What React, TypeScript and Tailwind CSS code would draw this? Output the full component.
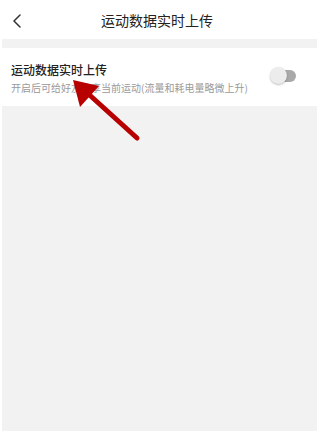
import React from "react";

export default function App() {
  return (
    <div
      className="relative w-[320px] h-[433px] bg-white flex flex-col overflow-hidden"
      style={{ fontFamily: '"Noto Sans CJK SC", "Noto Sans", sans-serif' }}
    >
      {/* Header */}
      <div className="relative h-[39px] flex items-center justify-center shrink-0">
        <svg
          className="absolute left-[12px] top-[14px]"
          width="10"
          height="14"
          viewBox="0 0 10 14"
          fill="none"
        >
          <path d="M8 1 L2 7 L8 13" stroke="#333" strokeWidth="1.5" strokeLinecap="round" strokeLinejoin="round" />
        </svg>
        <span className="text-[14px] leading-none text-[#222] ml-[-6px]">运动数据实时上传</span>
      </div>

      <div className="flex-1 flex flex-col pl-[2px] pr-[3px] pb-[2px]">
        <div className="h-[9px] bg-[#f2f2f2] shrink-0" />
        {/* Row */}
        <div className="h-[58px] bg-white flex items-center justify-between pl-[9px] pr-[20px] shrink-0">
          <div className="flex flex-col">
            <span className="text-[12px] leading-[16px] text-[#222] font-medium mt-[2px]">运动数据实时上传</span>
            <span className="text-[10px] leading-[14px] text-[#9a9a9a] mt-[3px]">
              开启后可给好友分享当前运动(流量和耗电量略微上升)
            </span>
          </div>
          <div className="relative w-[27px] h-[18px] mt-[-2px]">
            <div className="absolute left-[9px] top-[3px] w-[17px] h-[12px] rounded-full bg-[#a9a9a9]" />
            <div className="absolute left-0 top-0 w-[17px] h-[17px] rounded-full bg-[#ececec] shadow-[0_1px_2px_rgba(0,0,0,0.25)]" />
          </div>
        </div>
        <div className="flex-1 bg-[#f2f2f2]" />
      </div>

      {/* Red arrow annotation */}
      <svg className="absolute left-0 top-0 pointer-events-none" width="320" height="433">
        <line x1="137" y1="138" x2="84" y2="90" stroke="#b80000" strokeWidth="5" strokeLinecap="round" />
        <polygon points="73,80 99,86 80,107" fill="#b80000" />
      </svg>
    </div>
  );
}
